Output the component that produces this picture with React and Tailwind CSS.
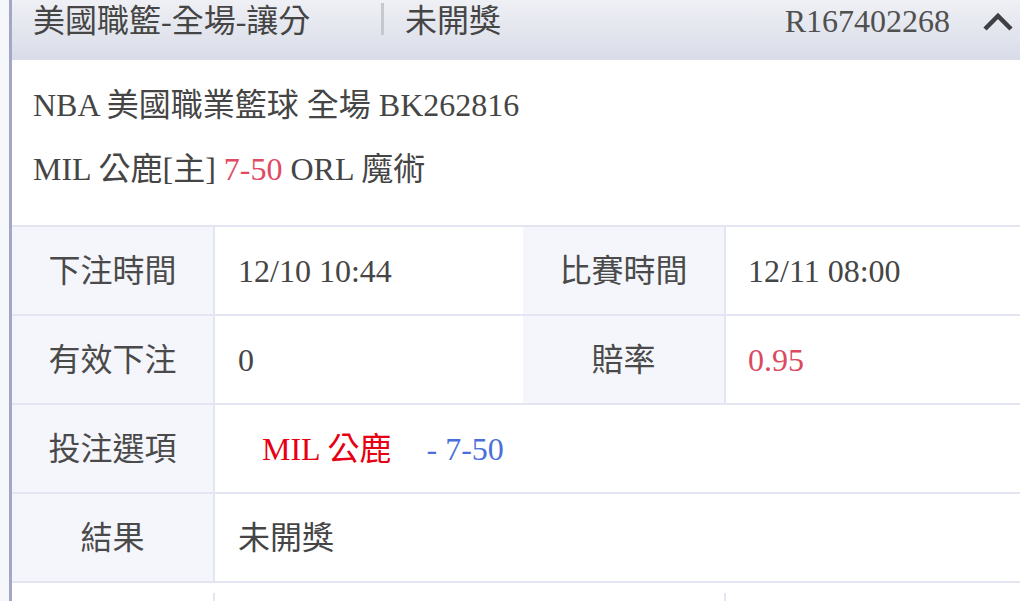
import React from 'react';

const FONT = { fontFamily: '"Liberation Serif", "Noto Sans CJK TC", serif' };

function Row({ label, value, label2, value2, full }) {
  return (
    <div className="flex h-[89px] border-t-2 border-[#e4e5f2]">
      <div className="w-[203px] shrink-0 bg-[#f5f6fb] border-r-2 border-[#e4e5f2] flex items-center justify-center text-[#4a4a4a]">
        {label}
      </div>
      {full ? (
        <div className="flex-1 flex items-center pl-[23px]">{value}</div>
      ) : (
        <>
          <div className="w-[308px] shrink-0 flex items-center pl-[23px]">{value}</div>
          <div className="w-[203px] shrink-0 bg-[#f5f6fb] border-r-2 border-[#e4e5f2] flex items-center justify-center text-[#4a4a4a]">
            {label2}
          </div>
          <div className="flex-1 flex items-center pl-[22px]">{value2}</div>
        </>
      )}
    </div>
  );
}

export default function App() {
  return (
    <div className="h-screen bg-[#f6f7fa] pl-[9px] overflow-hidden text-[32px] text-[#454545]" style={FONT}>
      <div className="border-l-[3px] border-[#a3a6c6] bg-white">
        {/* header */}
        <div className="h-[60px] flex items-start pt-[2px] pl-[21px] pr-[7px] bg-linear-to-b from-[#eff0f5] to-[#d9dce8] leading-[38px]">
          <span className="w-[348px] shrink-0">美國職籃-全場-讓分</span>
          <span className="mt-[1px] w-[3px] h-[32px] bg-[#c6c8cf] shrink-0" />
          <span className="ml-[21px]">未開獎</span>
          <span className="ml-auto text-[#505050]">R167402268</span>
          <svg className="ml-[33px] mt-[10px]" width="30" height="20" viewBox="0 0 30 20">
            <polyline points="2,17 15,4 28,17" fill="none" stroke="#3f3f45" strokeWidth="4.5" strokeLinejoin="miter" />
          </svg>
        </div>

        {/* match info */}
        <div className="pl-[21px] pt-[13px] pb-[24px] leading-[64px]">
          <div>NBA 美國職業籃球 全場 BK262816</div>
          <div>
            MIL 公鹿[主] <span className="text-[#e04a63]">7-50</span> ORL 魔術
          </div>
        </div>

        {/* details */}
        <div>
          <Row label="下注時間" value="12/10 10:44" label2="比賽時間" value2="12/11 08:00" />
          <Row label="有效下注" value="0" label2="賠率" value2={<span className="text-[#da4a62]">0.95</span>} />
          <Row
            label="投注選項"
            full
            value={
              <>
                <span className="ml-[24px] text-[#e60012]">MIL 公鹿</span>
                <span className="ml-[35px] text-[#4a6fdc]">- 7-50</span>
              </>
            }
          />
          <Row label="結果" full value="未開獎" />
          <div className="flex h-[89px] border-t-2 border-[#e4e5f2] pt-[10px]">
            <div className="w-[203px] shrink-0 border-r-2 border-[#e4e5f2]" />
            <div className="w-[308px] shrink-0" />
            <div className="w-[203px] shrink-0 border-r-2 border-[#e4e5f2]" />
            <div className="flex-1" />
          </div>
        </div>
      </div>
    </div>
  );
}
